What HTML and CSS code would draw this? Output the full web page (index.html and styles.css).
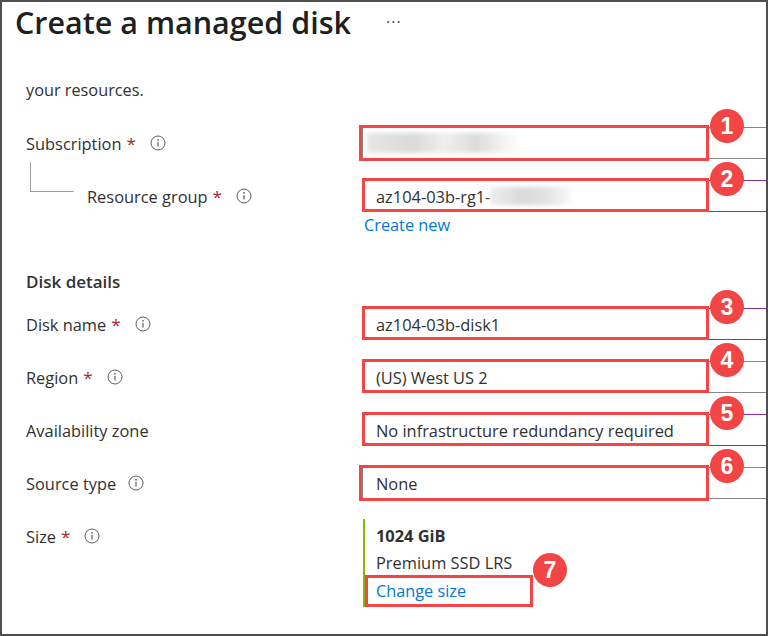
FILE: index.html
```html
<!DOCTYPE html>
<html>
<head>
<meta charset="utf-8">
<link rel="stylesheet" href="styles.css">
</head>
<body>
<div class="frame">
  <div class="header">
    <h1 class="title">Create a managed disk</h1>
    <span class="more">···</span>
  </div>
  <p class="intro">your resources.</p>
  <div class="form">
    <div class="row">
      <div class="label">Subscription<span class="req">*</span><svg class="info" viewBox="0 0 16 16"><circle cx="8" cy="8" r="7" fill="none" stroke="#605e5c" stroke-width="1"/><circle cx="8" cy="4.8" r="0.9" fill="#605e5c"/><path d="M8 7v4.6" stroke="#605e5c" stroke-width="1.2"/></svg></div>
      <div class="field">
        <div class="input"><span class="blur blur-sub"></span></div>
        <div class="mark mark-wide"></div>
        <div class="badge">1</div>
      </div>
    </div>
    <div class="row">
      <div class="label label-child">Resource group<span class="req">*</span><svg class="info" viewBox="0 0 16 16"><circle cx="8" cy="8" r="7" fill="none" stroke="#605e5c" stroke-width="1"/><circle cx="8" cy="4.8" r="0.9" fill="#605e5c"/><path d="M8 7v4.6" stroke="#605e5c" stroke-width="1.2"/></svg></div>
      <div class="field">
        <div class="input input-active">az104-03b-rg1-<span class="blur blur-rg"></span></div>
        <div class="mark"></div>
        <div class="badge">2</div>
        <a class="link create">Create new</a>
      </div>
    </div>
    <h2 class="section">Disk details</h2>
    <div class="row">
      <div class="label">Disk name<span class="req">*</span><svg class="info" viewBox="0 0 16 16"><circle cx="8" cy="8" r="7" fill="none" stroke="#605e5c" stroke-width="1"/><circle cx="8" cy="4.8" r="0.9" fill="#605e5c"/><path d="M8 7v4.6" stroke="#605e5c" stroke-width="1.2"/></svg></div>
      <div class="field">
        <div class="input input-active">az104-03b-disk1</div>
        <div class="mark"></div>
        <div class="badge">3</div>
      </div>
    </div>
    <div class="row">
      <div class="label">Region<span class="req">*</span><svg class="info" viewBox="0 0 16 16"><circle cx="8" cy="8" r="7" fill="none" stroke="#605e5c" stroke-width="1"/><circle cx="8" cy="4.8" r="0.9" fill="#605e5c"/><path d="M8 7v4.6" stroke="#605e5c" stroke-width="1.2"/></svg></div>
      <div class="field">
        <div class="input">(US) West US 2</div>
        <div class="mark"></div>
        <div class="badge">4</div>
      </div>
    </div>
    <div class="row">
      <div class="label">Availability zone</div>
      <div class="field">
        <div class="input input-active">No infrastructure redundancy required</div>
        <div class="mark"></div>
        <div class="badge">5</div>
      </div>
    </div>
    <div class="row">
      <div class="label">Source type<svg class="info info-noreq" viewBox="0 0 16 16"><circle cx="8" cy="8" r="7" fill="none" stroke="#605e5c" stroke-width="1"/><circle cx="8" cy="4.8" r="0.9" fill="#605e5c"/><path d="M8 7v4.6" stroke="#605e5c" stroke-width="1.2"/></svg></div>
      <div class="field">
        <div class="input">None</div>
        <div class="mark mark-wide"></div>
        <div class="badge">6</div>
      </div>
    </div>
    <div class="row row-size">
      <div class="label label-top">Size<span class="req">*</span><svg class="info" viewBox="0 0 16 16"><circle cx="8" cy="8" r="7" fill="none" stroke="#605e5c" stroke-width="1"/><circle cx="8" cy="4.8" r="0.9" fill="#605e5c"/><path d="M8 7v4.6" stroke="#605e5c" stroke-width="1.2"/></svg></div>
      <div class="sizebox">
        <div class="size-value">1024 GiB</div>
        <div class="size-tier">Premium SSD LRS</div>
        <a class="link size-link">Change size</a>
        <div class="mark mark-size"></div>
        <div class="badge badge-size">7</div>
      </div>
    </div>
  </div>
</div>
</body>
</html>
```
FILE: styles.css
```css
html, body {
  margin: 0;
  padding: 0;
  background: #fff;
}
body {
  font-family: "Open Sans", "Noto Sans", sans-serif;
  color: #323130;
}
.frame {
  width: 768px;
  height: 636px;
  box-sizing: border-box;
  border: 2px solid #4f4f4f;
  overflow: hidden;
  background: #fff;
}
.header {
  display: flex;
  align-items: center;
  height: 40px;
  padding-left: 13px;
}
.title {
  margin: 0;
  font-size: 30.5px;
  font-weight: 600;
  line-height: 40px;
  color: #201f1e;
}
.more {
  margin-left: 35px;
  font-size: 16px;
  color: #444;
  letter-spacing: 1px;
}
.intro {
  margin: 37px 0 0 24px;
  font-size: 16.3px;
  line-height: 22px;
}
.form {
  margin-top: 26px;
  padding-left: 24px;
}
.row {
  display: grid;
  grid-template-columns: 336px 1fr;
  align-items: start;
  margin-bottom: 21px;
}
.label {
  position: relative;
  display: flex;
  align-items: center;
  height: 32px;
  font-size: 16.4px;
}
.label-child {
  padding-left: 61px;
}
.label-child::before {
  content: "";
  position: absolute;
  left: 4px;
  top: -18px;
  width: 43px;
  height: 29px;
  border-left: 1px solid #a19f9d;
  border-bottom: 1px solid #a19f9d;
}
.req {
  color: #a4262c;
  margin-left: 5px;
  font-size: 17px;
}
.info {
  width: 16px;
  height: 16px;
  margin-left: 14px;
}
.info-noreq {
  margin-left: 12px;
}
.field {
  position: relative;
}
.input {
  display: flex;
  align-items: center;
  height: 32px;
  box-sizing: border-box;
  border: 1px solid #8a8886;
  border-right: none;
  margin-right: -4px;
  padding-left: 13px;
  font-size: 16.4px;
  white-space: nowrap;
}
.input-active {
  border-color: #8a2da5;
}
.blur {
  display: inline-block;
  filter: blur(2px);
}
.blur-sub {
  width: 156px;
  height: 20px;
  margin-left: -9px;
  background: linear-gradient(90deg, #e6e6e6 0%, #dadada 30%, #efefef 50%, #dcdcdc 70%, #f4f4f4 88%, #fff 100%);
}
.blur-rg {
  width: 80px;
  height: 18px;
  background: linear-gradient(90deg, #eee 0%, #dadada 40%, #e2e2e2 70%, #f8f8f8 100%);
}
.mark {
  position: absolute;
  left: 0;
  top: -2px;
  width: 347px;
  height: 34px;
  box-sizing: border-box;
  border: 3px solid #f24646;
}
.mark-wide {
  left: -3px;
  width: 350px;
  height: 36px;
}
.badge {
  position: absolute;
  left: 348px;
  top: -18px;
  width: 34px;
  height: 34px;
  border-radius: 50%;
  background: #f24545;
  color: #fff;
  font-family: "Liberation Sans", Arial, sans-serif;
  font-weight: bold;
  font-size: 23px;
  line-height: 34px;
  text-align: center;
}
.link {
  display: block;
  color: #0078d4;
  font-size: 16.3px;
  line-height: 20px;
  cursor: pointer;
}
.create {
  margin-top: 3px;
  padding-left: 2px;
}
.section {
  margin: 36px 0 15px 0;
  font-size: 17px;
  font-weight: 600;
  line-height: 22px;
  color: #323130;
}
.row-size {
  margin-top: -1px;
}
.label-top {
  margin-top: 1px;
}
.sizebox {
  position: relative;
  margin-left: 1px;
  border-left: 2px solid #7fba00;
  padding: 6px 0 5px 11px;
  font-size: 16.4px;
  line-height: 22px;
}
.size-value {
  font-weight: 700;
}
.size-tier {
  margin-top: 5px;
}
.size-link {
  margin-top: 6px;
  line-height: 22px;
}
.mark-size {
  left: 0px;
  top: 56px;
  width: 168px;
  height: 32px;
}
.badge-size {
  left: 168px;
  top: 34px;
}
```
